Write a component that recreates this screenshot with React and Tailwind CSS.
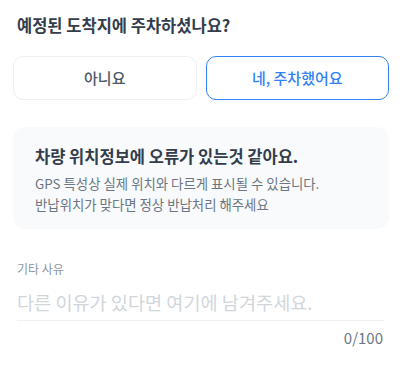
import { useState } from 'react';

const FONT = { fontFamily: '"Noto Sans CJK KR", "Noto Sans", sans-serif' };

function ChoiceButton({ active, children, onClick }) {
  return (
    <button
      onClick={onClick}
      className={`flex-1 h-[44px] rounded-[10px] border text-[15px] font-medium ${
        active
          ? 'border-[#3182f6] text-[#3182f6] bg-white'
          : 'border-[#eef0f3] text-[#4e5968] bg-white'
      }`}
    >
      {children}
    </button>
  );
}

export default function App() {
  const [parked, setParked] = useState(true);
  const [reason, setReason] = useState('');

  return (
    <div style={FONT} className="w-[402px] h-[370px] bg-white px-[13px] pt-[12px]">
      <h2 className="px-[4px] text-[16.5px] leading-[26px] font-bold text-[#333d4b]">
        예정된 도착지에 주차하셨나요?
      </h2>

      <div className="flex gap-[9px] mt-[18px]">
        <ChoiceButton active={!parked} onClick={() => setParked(false)}>
          아니요
        </ChoiceButton>
        <ChoiceButton active={parked} onClick={() => setParked(true)}>
          네, 주차했어요
        </ChoiceButton>
      </div>

      <div className="mt-[27px] rounded-[12px] bg-[#f9fafb] px-[22px] pt-[18px] pb-[14px]">
        <p className="text-[16.5px] leading-[22px] font-semibold text-[#333d4b]">
          차량 위치정보에 오류가 있는것 같아요.
        </p>
        <p className="mt-[6px] text-[13.4px] leading-[21px] text-[#6b7684]">
          GPS 특성상 실제 위치와 다르게 표시될 수 있습니다.
          <br />
          반납위치가 맞다면 정상 반납처리 해주세요
        </p>
      </div>

      <div className="mt-[31px] px-[4px]">
        <label className="block text-[12px] leading-[17px] text-[#8b95a1]">기타 사유</label>
        <input
          value={reason}
          maxLength={100}
          onChange={(e) => setReason(e.target.value)}
          placeholder="다른 이유가 있다면 여기에 남겨주세요."
          style={FONT}
          className="mt-[5px] w-full h-[39px] border-b border-[#eef0f3] text-[18.6px] text-[#333d4b] placeholder:text-[#d1d6db] outline-none"
        />
        <div className="mt-[7px] text-right text-[15px] leading-[20px] text-[#6b7684] pr-[2px]">
          {reason.length}/100
        </div>
      </div>
    </div>
  );
}
